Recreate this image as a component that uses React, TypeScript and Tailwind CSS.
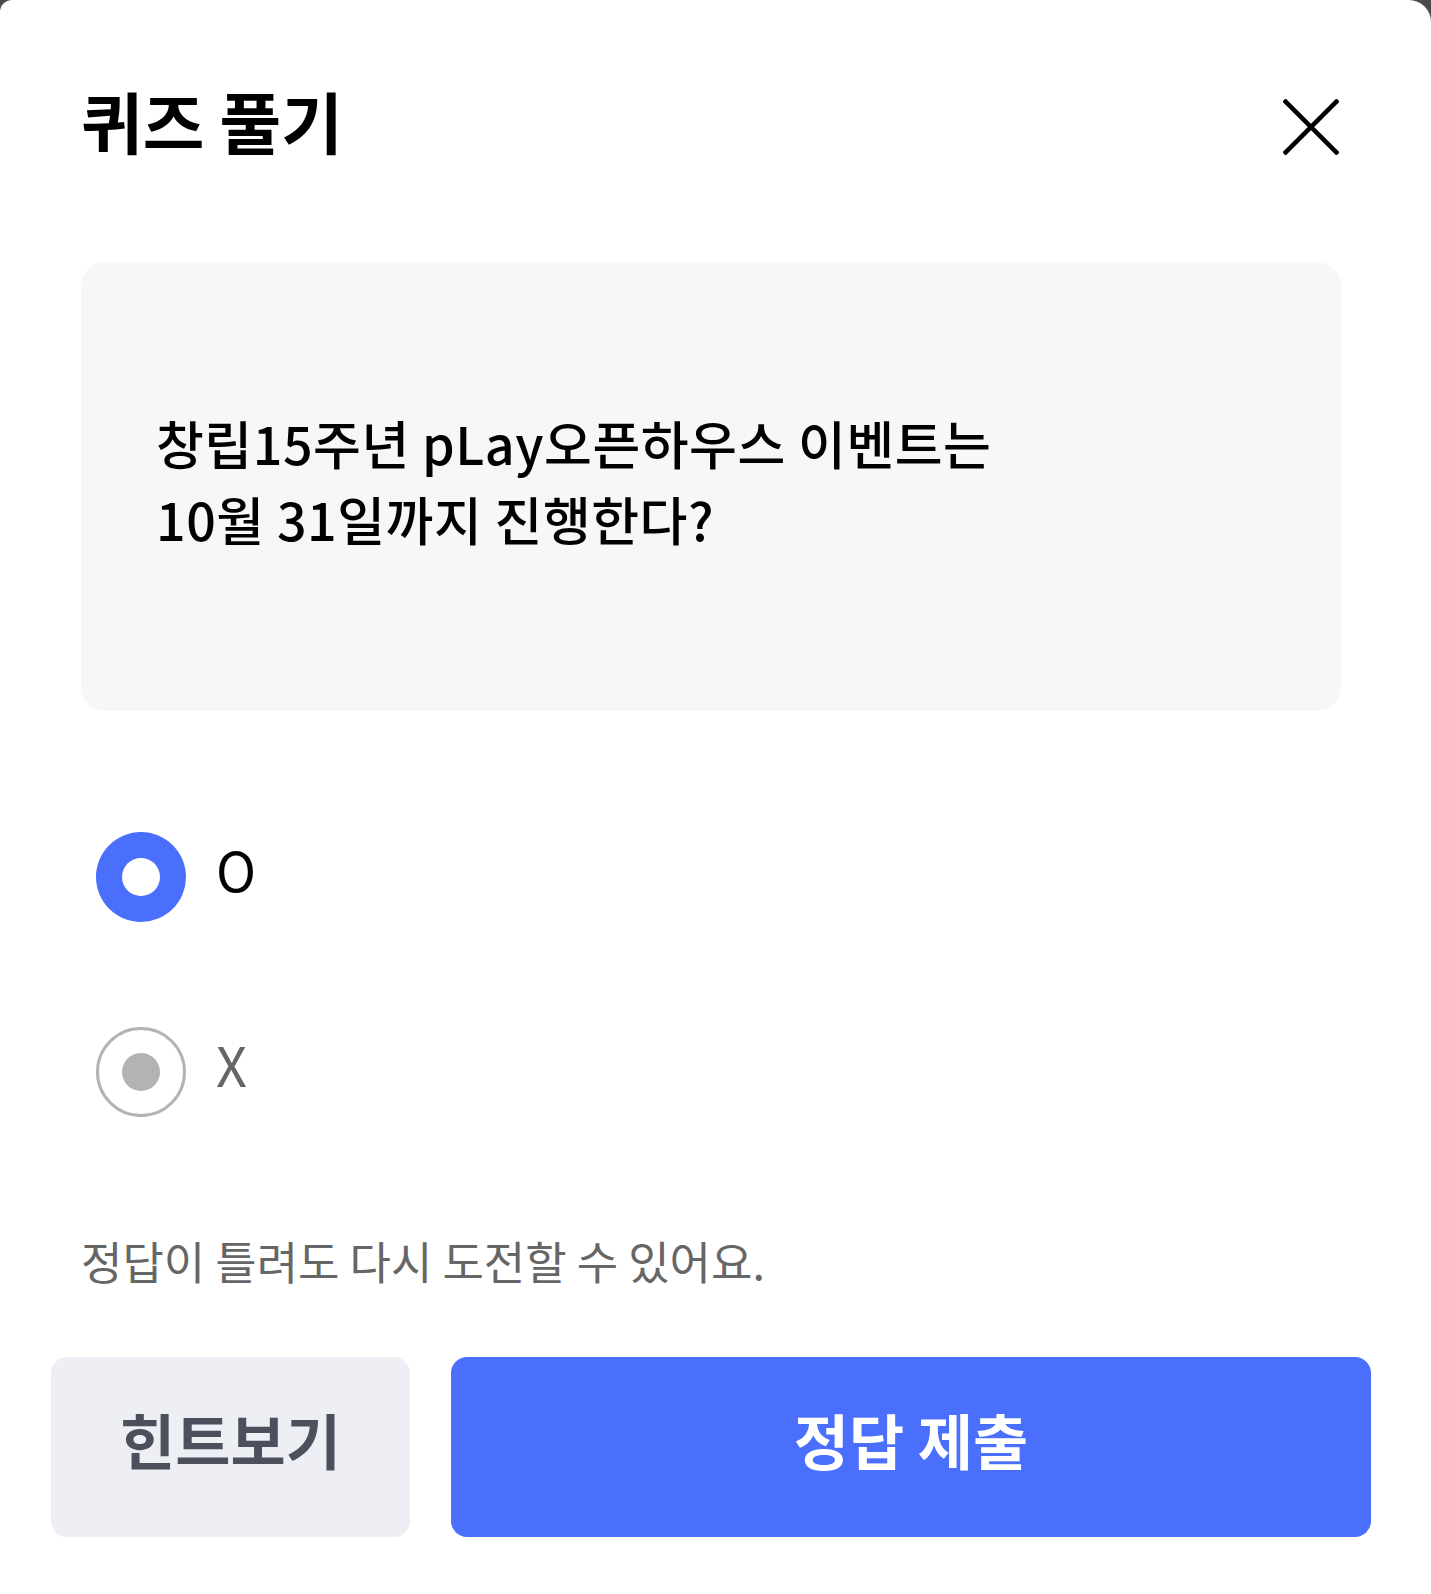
import React from "react";

export default function App() {
  const font = { fontFamily: '"Noto Sans CJK KR", "Noto Sans", sans-serif' };
  return (
    <div className="w-[1431px] h-[1594px] bg-[#4a4a4a] overflow-hidden" style={font}>
      <div className="w-full h-full bg-white rounded-tl-[12px] rounded-tr-[22px] pl-[81px] pr-[90px] pt-[85px] flex flex-col">
        <div className="flex items-center justify-between h-[70px]">
          <h1 className="text-[67px] leading-[70px] font-bold text-black tracking-[0em]">퀴즈 풀기</h1>
          <svg width="56" height="56" viewBox="0 0 56 56" className="mt-[13px] mr-[2px]">
            <path d="M1 1 L55 55 M55 1 L1 55" stroke="#000" strokeWidth="4.5" fill="none" />
          </svg>
        </div>

        <div className="mt-[107px] h-[449px] rounded-[24px] bg-[#f7f7f7] flex items-center pl-[75px] pb-[12px]">
          <p className="text-[52px] leading-[76px] font-medium text-black tracking-[0.01em]">
            창립15주년 pLay오픈하우스 이벤트는
            <br />
            10월 31일까지 진행한다?
          </p>
        </div>

        <div className="mt-[121px] flex items-center h-[90px] pl-[15px]">
          <div className="w-[90px] h-[90px] rounded-full bg-[#4a6ffd] flex items-center justify-center">
            <div className="w-[38px] h-[38px] rounded-full bg-white" />
          </div>
          <span className="ml-[30px] mb-[16px] text-[54px] leading-[60px] text-black">O</span>
        </div>

        <div className="mt-[105px] flex items-center h-[90px] pl-[15px]">
          <div className="w-[90px] h-[90px] rounded-full border-[3px] border-[#b3b3b3] flex items-center justify-center">
            <div className="w-[38px] h-[38px] rounded-full bg-[#b3b3b3]" />
          </div>
          <span className="ml-[30px] mb-[16px] text-[54px] leading-[60px] text-[#666666]">X</span>
        </div>

        <p className="mt-[119px] text-[45px] leading-[50px] text-[#666666]">
          정답이 틀려도 다시 도전할 수 있어요.
        </p>

        <div className="mt-[71px] -ml-[30px] -mr-[30px] flex gap-[41px]">
          <button className="w-[359px] h-[180px] rounded-[16px] bg-[#eeeff4] text-[#4b505c] text-[60px] font-bold pb-[16px]">
            힌트보기
          </button>
          <button className="flex-1 h-[180px] rounded-[16px] bg-[#4a6ffd] text-white text-[60px] font-bold pb-[16px]">
            정답 제출
          </button>
        </div>
      </div>
    </div>
  );
}
